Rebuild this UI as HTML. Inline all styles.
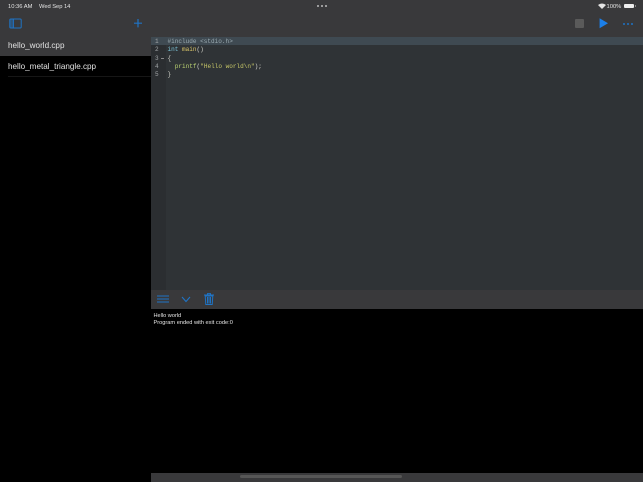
<!DOCTYPE html>
<html><head><meta charset="utf-8"><style>
html,body{margin:0;padding:0;background:#000}
#p{position:relative;width:643px;height:482px;overflow:hidden;background:#000;font-family:"Liberation Sans",sans-serif;color:#ddd}
#p div,#p svg{position:absolute}
.t{white-space:pre;line-height:1}
.c{font-family:"Liberation Mono",monospace;font-size:6.05px;white-space:pre;line-height:8.3px;color:#d0d0c8}
.n{font-family:"Liberation Mono",monospace;font-size:6.05px;color:#a0a4a6;left:155px;line-height:8.3px;white-space:pre}
</style></head><body><div id="p">
<div style="left:0;top:0;width:643px;height:37px;background:#39393b"></div>
<div class="t" style="left:8px;top:4px;height:6px;line-height:6px;font-size:5.8px;color:#e4e4e4">10:36 AM</div>
<div class="t" style="left:39px;top:4px;height:6px;line-height:6px;font-size:5.8px;color:#e4e4e4;letter-spacing:-.05px">Wed Sep 14</div>
<div class="t" style="left:606.5px;top:4px;height:6px;line-height:6px;font-size:5.8px;color:#e4e4e4">100%</div>
<svg style="left:598px;top:3px" width="8" height="6" viewBox="0 0 8 6"><path d="M0 2 Q4 -1 8 2 L4 6Z" fill="#e4e4e4"/></svg>
<div style="left:624px;top:4px;width:10px;height:4px;background:#eee;border-radius:1px"></div>
<div style="left:635px;top:5px;width:1px;height:2px;background:#888"></div>
<div style="left:317px;top:5px;width:2px;height:2px;background:#bbb;border-radius:1px"></div>
<div style="left:321px;top:5px;width:2px;height:2px;background:#bbb;border-radius:1px"></div>
<div style="left:325px;top:5px;width:2px;height:2px;background:#bbb;border-radius:1px"></div>
<svg style="left:9px;top:18px" width="13" height="11" viewBox="0 0 13 11"><rect x=".8" y="1" width="11.4" height="9" rx="1" fill="none" stroke="#1f73c4" stroke-width="1"/><rect x="1" y="1.3" width="3.2" height="8.4" fill="#1f73c4" opacity=".45"/><path d="M4.4 1v9" stroke="#1f73c4"/></svg>
<svg style="left:133px;top:18px" width="10" height="10" viewBox="0 0 10 10"><path d="M5 1v8.4M1 5.2h8" stroke="#1f73c4" stroke-width="1.2"/></svg>
<div style="left:575px;top:19px;width:9px;height:9px;background:#5a5a5a;border-radius:1px"></div>
<svg style="left:599px;top:18px" width="10" height="11" viewBox="0 0 10 11"><path d="M.6 .3L9 5.3 .6 10.3Z" fill="#1c7fe8"/></svg>
<div style="left:623px;top:23px;width:2px;height:2px;background:#1f73c4;border-radius:1px"></div>
<div style="left:627px;top:23px;width:2px;height:2px;background:#1f73c4;border-radius:1px"></div>
<div style="left:631px;top:23px;width:2px;height:2px;background:#1f73c4;border-radius:1px"></div>
<div style="left:0;top:37px;width:151px;height:19px;background:#39393b"></div>
<div class="t" style="left:8px;top:42px;font-size:8.15px;color:#e2e2e2">hello_world.cpp</div>
<div class="t" style="left:8px;top:63px;font-size:8.15px;color:#e2e2e2">hello_metal_triangle.cpp</div>
<div style="left:8px;top:76px;width:143px;height:1px;background:#161616"></div>
<div style="left:151px;top:37px;width:492px;height:253px;background:#2f3336"></div>
<div style="left:151px;top:37px;width:15px;height:253px;background:#2b2e31"></div>
<div style="left:151px;top:37px;width:492px;height:8px;background:#3f4a52"></div>
<div class="n" style="top:38.2px">1
2
3
4
5</div>
<div style="left:161px;top:58px;width:3px;height:1px;background:#888"></div>
<div class="c" style="left:167.5px;top:38.2px"><span style="color:#9aaab0">#include &lt;stdio.h&gt;</span>
<span style="color:#7cc4d8">int</span> <span style="color:#d8c468">main</span>()
{
  <span style="color:#b8d070">printf</span>(<span style="color:#c8c868">"Hello world\n"</span>);
}</div>
<div style="left:151px;top:290px;width:492px;height:19px;background:#39393b"></div>
<svg style="left:157px;top:294px" width="12" height="10" viewBox="0 0 12 10"><path d="M0 2h12M0 5h12M0 8h12" stroke="#1f73c4" stroke-width="1"/></svg>
<svg style="left:181px;top:296px" width="10" height="7" viewBox="0 0 10 7"><path d="M1 1L5 5.5 9 1" fill="none" stroke="#1f73c4" stroke-width="1.1"/></svg>
<svg style="left:204px;top:293px" width="10" height="12" viewBox="0 0 10 12"><path d="M0 2h10M3.5 2V.6h3V2M1.2 3l.6 8.5h6.4L8.8 3ZM3.5 4v6.5M5 4v6.5M6.5 4v6.5" fill="none" stroke="#1f73c4" stroke-width="1"/></svg>
<div class="t" style="left:153.5px;top:314px;font-size:5.6px;color:#e4e4e4">Hello world</div>
<div class="t" style="left:153.5px;top:321px;font-size:5.65px;color:#e4e4e4">Program ended with exit code:0</div>
<div style="left:151px;top:473px;width:492px;height:9px;background:#39393b"></div>
<div style="left:240px;top:475px;width:162px;height:3px;background:#565656;border-radius:1.5px"></div>
</div></body></html>
